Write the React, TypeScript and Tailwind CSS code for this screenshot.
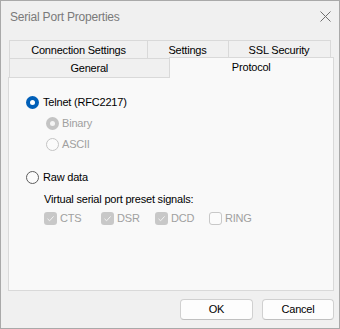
import React from 'react';

const font = { fontFamily: '"Liberation Sans", Arial, sans-serif' };

const Radio = ({ checked, disabled }: { checked?: boolean; disabled?: boolean }) => {
  if (checked) {
    return (
      <span className={`w-[13px] h-[13px] rounded-full flex items-center justify-center shrink-0 ${disabled ? 'bg-[#c4c4c4]' : 'bg-[#005fb8]'}`}>
        <span className={`w-[5px] h-[5px] rounded-full ${disabled ? 'bg-[#f4f4f4]' : 'bg-white'}`} />
      </span>
    );
  }
  return (
    <span
      className={`w-[13px] h-[13px] rounded-full border shrink-0 ${
        disabled ? 'border-[#c4c4c4] bg-[#fbfbfb]' : 'border-[#5d5d5d] bg-[#fbfbfb]'
      }`}
    />
  );
};

const Check = ({ checked }: { checked?: boolean }) =>
  checked ? (
    <span className="w-[13px] h-[13px] rounded-[3px] bg-[#c8c8c8] flex items-center justify-center shrink-0">
      <svg width="9" height="9" viewBox="0 0 9 9">
        <path d="M1.5 4.8 L3.6 6.8 L7.6 2.4" fill="none" stroke="#f4f4f4" strokeWidth="1" />
      </svg>
    </span>
  ) : (
    <span className="w-[13px] h-[13px] rounded-[3px] border border-[#c8c8c8] bg-[#fbfbfb] shrink-0" />
  );

const App = () => {
  const signals = [
    { label: 'CTS', checked: true, w: 'w-[57px]' },
    { label: 'DSR', checked: true, w: 'w-[54px]' },
    { label: 'DCD', checked: true, w: 'w-[54px]' },
    { label: 'RING', checked: false, w: 'w-[60px]' },
  ];

  return (
    <div
      className="w-[340px] h-[329px] border border-[#a9a9a9] bg-[#f0f0f0] flex flex-col text-[11px] tracking-[-0.2px] text-black"
      style={font}
    >
      {/* Title bar */}
      <div className="h-[31px] flex items-center justify-between pl-[9px] pr-[8px] shrink-0">
        <span className="text-[12px] text-[#7a7a7a] tracking-[-0.2px]">Serial Port Properties</span>
        <svg width="11" height="11" viewBox="0 0 11 11">
          <path d="M0.5 0.5 L10.5 10.5 M10.5 0.5 L0.5 10.5" stroke="#6f6f6f" strokeWidth="1" />
        </svg>
      </div>

      <div className="ml-[7px] mt-[8px] w-[326px] flex flex-col">
        {/* Tabs, back row */}
        <div className="flex pl-[1px] h-[18px]">
          <div className="w-[139px] border-t border-l border-r border-[#d9d9d9] flex items-center justify-center pt-[2px]">
            Connection Settings
          </div>
          <div className="w-[82px] -ml-px border-t border-r border-[#d9d9d9] flex items-center justify-center pt-[2px]">
            Settings
          </div>
          <div className="w-[103px] -ml-px border-t border-r border-[#d9d9d9] flex items-center justify-center pt-[2px]">
            SSL Security
          </div>
        </div>
        {/* Tabs, front row */}
        <div className="flex pl-[1px] h-[19px] items-end">
          <div className="w-[160px] h-[19px] border-t border-l border-[#d9d9d9] flex items-center justify-center pt-[1px]">
            General
          </div>
          <div className="relative z-10 w-[166px] h-[21px] -mt-[2px] border-t border-l border-r border-[#d9d9d9] bg-[#f9f9f9] flex items-start justify-center pt-[1px] -mb-px">
            Protocol
          </div>
        </div>

        {/* Panel */}
        <div className="h-[214px] border border-[#d9d9d9] bg-[#f9f9f9] flex flex-col pt-[14px] pl-[17px]">
          <div className="h-[21px] flex items-center gap-[4px]">
            <Radio checked />
            <span>Telnet (RFC2217)</span>
          </div>
          <div className="pl-[20px] flex flex-col text-[#a0a0a0]">
            <div className="h-[21px] flex items-center gap-[3px]">
              <Radio checked disabled />
              <span>Binary</span>
            </div>
            <div className="h-[21px] flex items-center gap-[3px]">
              <Radio disabled />
              <span>ASCII</span>
            </div>
          </div>
          <div className="h-[21px] mt-[12px] flex items-center gap-[4px]">
            <Radio />
            <span>Raw data</span>
          </div>
          <div className="pl-[18px] flex flex-col">
            <div className="h-[20px] flex items-center pt-[2px]">Virtual serial port preset signals:</div>
            <div className="h-[20px] flex items-center text-[#a0a0a0]">
              {signals.map((s) => (
                <div key={s.label} className={`${s.w} flex items-center gap-[3px]`}>
                  <Check checked={s.checked} />
                  <span>{s.label}</span>
                </div>
              ))}
            </div>
          </div>
        </div>

        {/* Buttons */}
        <div className="flex justify-end gap-[9px] mt-[8px]">
          <button className="w-[73px] h-[21px] rounded-[4px] border border-[#d0d0d0] border-b-[#c0c0c0] bg-[#fdfdfd] text-[11px]">
            OK
          </button>
          <button className="w-[72px] h-[21px] rounded-[4px] border border-[#d0d0d0] border-b-[#c0c0c0] bg-[#fdfdfd] text-[11px]">
            Cancel
          </button>
        </div>
      </div>
    </div>
  );
};

export default App;
